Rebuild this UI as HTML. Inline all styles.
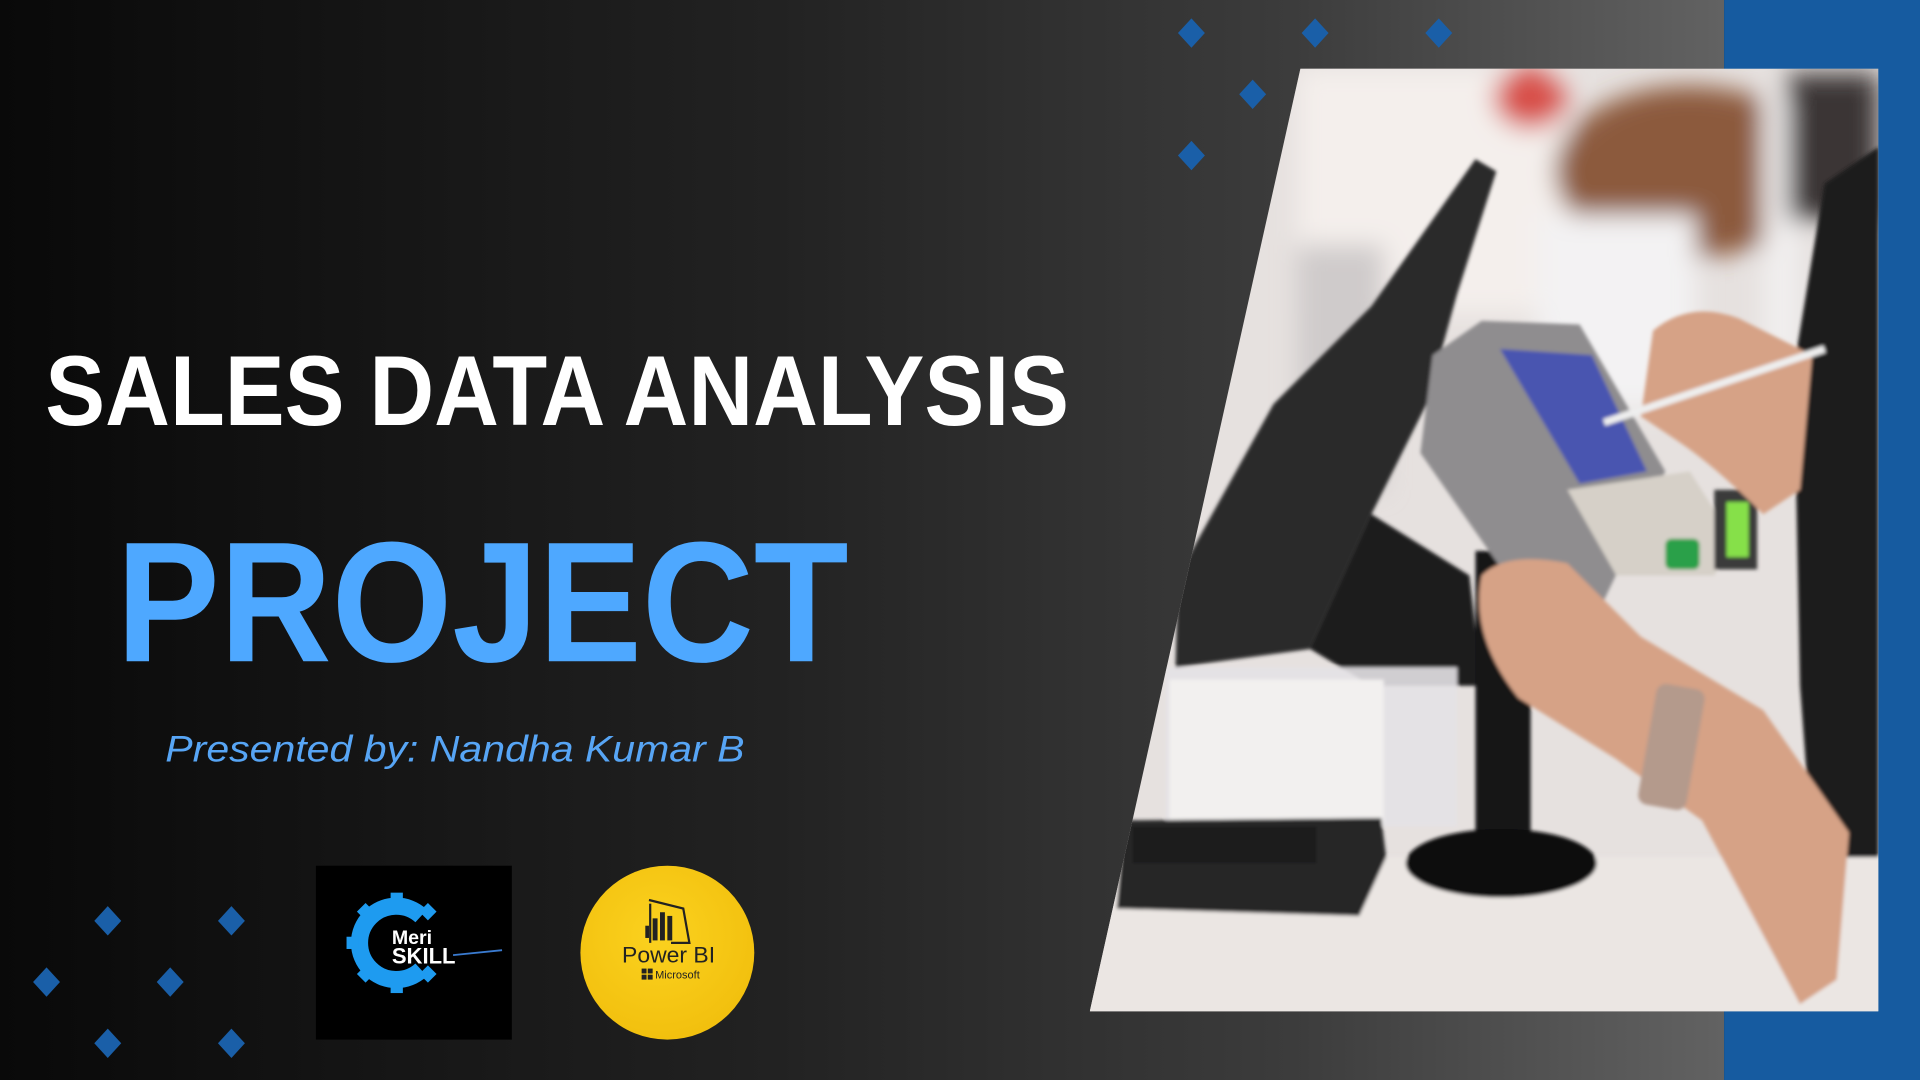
<!DOCTYPE html>
<html><head><meta charset="utf-8"><style>html,body{margin:0;padding:0;background:#111;overflow:hidden}svg{display:block}</style></head>
<body>
<svg width="1920" height="1080" viewBox="0 0 1568 882" preserveAspectRatio="none" xmlns="http://www.w3.org/2000/svg">
<defs>
<linearGradient id="bg" x1="0" x2="1" y1="0" y2="0">
<stop offset="0" stop-color="#090909"/><stop offset="0.45" stop-color="#222"/><stop offset="0.75" stop-color="#3c3c3c"/><stop offset="1" stop-color="#626262"/>
</linearGradient>
<clipPath id="ph"><polygon points="1062,56 1534,56 1534,826 890,826"/></clipPath>
<filter id="b6"><feGaussianBlur stdDeviation="10"/></filter>
<filter id="b2"><feGaussianBlur stdDeviation="1.5"/></filter>
<radialGradient id="yl" cx="0.45" cy="0.4" r="0.6"><stop offset="0" stop-color="#fbd21f"/><stop offset="1" stop-color="#f2c00e"/></radialGradient>
</defs>
<rect width="1408" height="882" fill="url(#bg)"/>
<rect x="1408" width="160" height="882" fill="#165ba0"/>

<!-- photo -->
<g clip-path="url(#ph)">
<rect x="880" y="50" width="660" height="780" fill="#e6e1df"/>
<g filter="url(#b6)">
<rect x="1060" y="56" width="220" height="200" fill="#f4efec"/>
<ellipse cx="1380" cy="140" rx="110" ry="70" fill="#8c5a3d"/>
<ellipse cx="1250" cy="80" rx="30" ry="25" fill="#d8504a"/>
<rect x="1255" y="175" width="130" height="160" fill="#f3f2f3"/>
<rect x="1440" y="80" width="30" height="260" fill="#f1efef"/>
<rect x="1060" y="200" width="70" height="200" fill="#cfcbcb"/>
<rect x="1460" y="60" width="74" height="120" fill="#3a3636"/>
</g>
<g filter="url(#b2)">
<polygon points="1490,150 1534,120 1534,826 1490,826 1470,560 1465,300" fill="#1e1c1c"/>
<polygon points="1205,130 1222,140 1190,240 1165,330 1120,420 1070,530 960,545 962,470 1040,330 1120,250" fill="#2b2a2c"/>
<polygon points="1120,420 1200,470 1210,560 1120,560 1070,530" fill="#1a1a1b"/>
<rect x="952" y="545" width="238" height="130" fill="#e4e2e6" opacity="0.9"/>
<rect x="955" y="555" width="175" height="120" fill="#f2f0ef"/>
<rect x="880" y="700" width="660" height="130" fill="#ebe6e3"/>
<polygon points="918,670 1128,668 1132,700 1110,748 912,742" fill="#272628"/>
<rect x="925" y="675" width="150" height="30" fill="#131314" opacity="0.6"/>
<rect x="1205" y="450" width="45" height="250" fill="#121213"/>
<ellipse cx="1226" cy="705" rx="78" ry="28" fill="#101011"/>
<polygon points="1170,290 1210,262 1290,265 1360,385 1310,490 1230,470 1160,370" fill="#8f8d8f"/>
<polygon points="1225,285 1300,290 1345,385 1290,395" fill="#4a55b0"/>
<polygon points="1280,400 1380,385 1415,440 1400,470 1320,470" fill="#d6d0c8"/>
<rect x="1360" y="440" width="28" height="25" rx="5" fill="#2aa04a"/>
<rect x="1400" y="400" width="35" height="65" fill="#3a3a3a"/><rect x="1410" y="410" width="18" height="45" fill="#86e04a"/>
<g fill="#d6a286">
<path d="M1350,270 Q1380,245 1420,260 L1480,290 L1470,400 L1440,420 Q1400,380 1370,360 L1340,340 Z"/>
<path d="M1210,470 Q1230,450 1280,460 L1340,520 L1440,580 L1510,680 L1500,800 L1470,820 L1390,670 L1320,620 L1240,570 Q1200,520 1210,470 Z"/>
</g>
<rect x="1345" y="560" width="40" height="100" rx="8" fill="#b49a8c" transform="rotate(10 1365 610)"/>
<line x1="1310" y1="345" x2="1490" y2="285" stroke="#eee" stroke-width="6"/>
</g>
</g>

<!-- diamonds -->
<g fill="#1a5fa8">
<path d="M973,15 l11,12 -11,12 -11,-12z"/><path d="M1074,15 l11,12 -11,12 -11,-12z"/><path d="M1175,15 l11,12 -11,12 -11,-12z"/>
<path d="M1023,65 l11,12 -11,12 -11,-12z"/><path d="M973,115 l11,12 -11,12 -11,-12z"/>
<path d="M88,740 l11,12 -11,12 -11,-12z"/><path d="M189,740 l11,12 -11,12 -11,-12z"/>
<path d="M38,790 l11,12 -11,12 -11,-12z"/><path d="M139,790 l11,12 -11,12 -11,-12z"/>
<path d="M88,840 l11,12 -11,12 -11,-12z"/><path d="M189,840 l11,12 -11,12 -11,-12z"/>
</g>

<!-- text -->
<text x="37" y="347" font-family="Liberation Sans, sans-serif" font-weight="bold" font-size="81" fill="#fff" textLength="836" lengthAdjust="spacingAndGlyphs">SALES DATA ANALYSIS</text>
<text x="95" y="540" font-family="Liberation Sans, sans-serif" font-weight="bold" font-size="140" fill="#4ea8ff" textLength="598" lengthAdjust="spacingAndGlyphs">PROJECT</text>
<text x="135" y="622" font-family="Liberation Sans, sans-serif" font-style="italic" font-size="30" fill="#57a5f5" textLength="473" lengthAdjust="spacingAndGlyphs">Presented by: Nandha Kumar B</text>

<!-- Meri skill -->
<rect x="258" y="707" width="160" height="142" fill="#000"/>
<g transform="translate(324,770)">
<path d="M20,-22 A30,30 0 1 0 20,22" fill="none" stroke="#1e9bf0" stroke-width="14"/>
<g fill="#1e9bf0">
<rect x="-5" y="-41" width="10" height="10"/><rect x="-5" y="31" width="10" height="10"/>
<rect x="-41" y="-5" width="10" height="10"/>
<rect x="-5" y="-41" width="10" height="10" transform="rotate(-45)"/><rect x="-5" y="-41" width="10" height="10" transform="rotate(-135)"/>
<rect x="-5" y="-41" width="10" height="10" transform="rotate(45)"/><rect x="-5" y="-41" width="10" height="10" transform="rotate(135)"/>
</g>
</g>
<line x1="370" y1="780" x2="410" y2="776" stroke="#3a7bd0" stroke-width="1.5"/>
<text x="320" y="771" font-family="Liberation Sans, sans-serif" font-weight="bold" font-size="16" fill="#fff">Meri</text>
<text x="320" y="787" font-family="Liberation Sans, sans-serif" font-weight="bold" font-size="18" fill="#fff" textLength="52" lengthAdjust="spacingAndGlyphs">SKILL</text>

<!-- Power BI -->
<ellipse cx="545" cy="778" rx="71" ry="71" fill="url(#yl)"/>
<g fill="none" stroke="#222" stroke-width="1.8">
<path d="M530,735 L558,742 L563,770 L548,770"/>
<line x1="531" y1="738" x2="531" y2="770"/>
</g>
<g fill="#222"><rect x="527" y="756" width="3" height="10"/><rect x="533" y="750" width="4" height="18"/><rect x="539" y="745" width="4" height="23"/><rect x="545" y="748" width="4" height="20"/></g>
<text x="546" y="786" text-anchor="middle" font-family="Liberation Sans, sans-serif" font-size="18" fill="#222" textLength="76" lengthAdjust="spacingAndGlyphs">Power BI</text>
<g fill="#222"><rect x="524" y="791" width="4" height="4"/><rect x="529" y="791" width="4" height="4"/><rect x="524" y="796" width="4" height="4"/><rect x="529" y="796" width="4" height="4"/></g>
<text x="535" y="799" font-family="Liberation Sans, sans-serif" font-size="9" fill="#222">Microsoft</text>
</svg>
</body></html>
